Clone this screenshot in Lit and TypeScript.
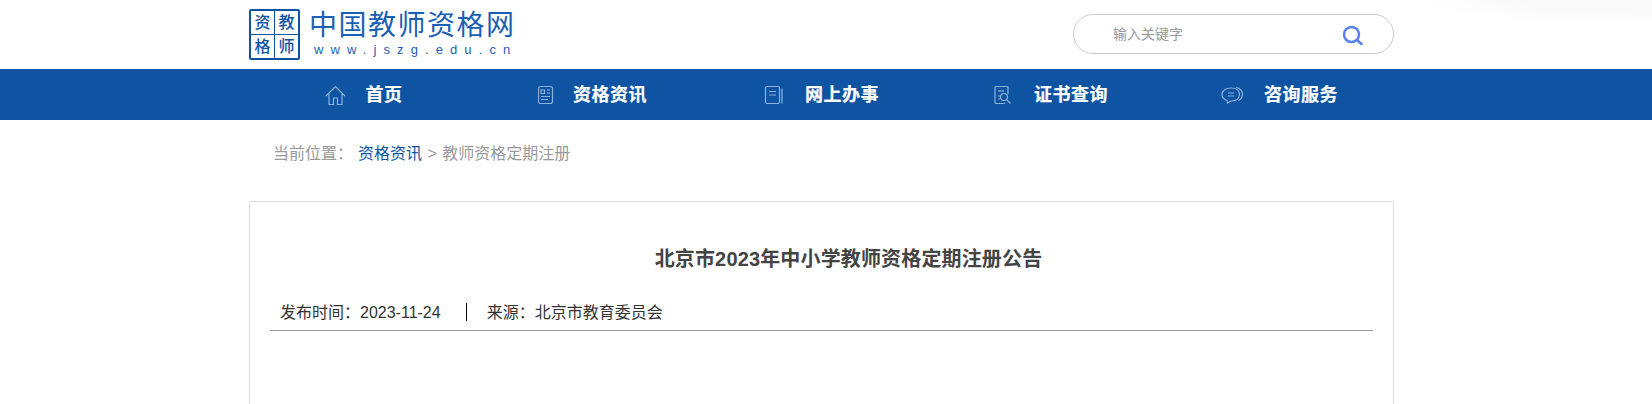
import { LitElement, html, css, svg } from "lit";
import { customElement } from "lit/decorators.js";

const navItems = [
  {
    label: "首页",
    width: 22,
    box: "0 0 22 20",
    icon: svg`<path d="M1 11 10.500 1.500 20 11M4 9v10.500h4.500v-6.500h4v6.500H17V9" />`,
  },
  {
    label: "资格资讯",
    width: 16,
    box: "2 0 16 20",
    icon: svg`<rect x="2.500" y="1.500" width="14" height="17" rx="2" /><path d="M5 5h3.500v3.500H5zM11 5h3M11 8h3M5 11.500h9M5 14.500h7" />`,
  },
  {
    label: "网上办事",
    width: 22,
    box: "0 0 22 20",
    icon: svg`<rect x="1.500" y="1.500" width="14" height="17" rx="1.500" /><path d="M5 6.500h7M5 10h7M18 3.500v15" />`,
  },
  {
    label: "证书查询",
    width: 22,
    box: "0 0 22 20",
    icon: svg`<path d="M15 9V2.500a1 1 0 0 0-1-1H3a1 1 0 0 0-1 1v15a1 1 0 0 0 1 1h9" /><path d="M5 6h6" /><circle cx="11" cy="12" r="3.500" /><path d="m14 15 3.500 3.500M5 11h2M5 14h2" />`,
  },
  {
    label: "咨询服务",
    width: 24,
    box: "0 0 24 20",
    icon: svg`<path d="M10 3c5 0 8.500 2.500 8.500 6.500S15 16 10 16l-1 .5-2.500 1.500-.5-2.500C3 14.500 1 12.500 1 9.500 1 5.500 5 3 10 3Z" /><path d="M15 2.500c4 .5 6.500 3.500 6.500 6.500 0 2.500-1 5-4 6.500M7 8h6M7 11h6" />`,
  },
];

@customElement("app-root")
export class AppRoot extends LitElement {
  static styles = css`
    :host {
      display: block;
      height: 404px;
      overflow: hidden;
      background: #fff;
      font-family: "Liberation Sans", "Noto Sans CJK SC", sans-serif;
    }
    .wrap {
      width: 1145px;
      margin-left: 249px;
    }
    .top {
      background: radial-gradient(ellipse 240px 26px at 100% 0, #f9f9f9 55%, #fff);
    }
    .header {
      height: 69px;
      display: flex;
      align-items: flex-start;
      justify-content: space-between;
    }
    .logo {
      display: flex;
      gap: 9px;
      padding-top: 9px;
    }
    .seal {
      width: 51px;
      height: 51px;
      box-sizing: border-box;
      border: 2px solid #0f54a3;
      border-radius: 2px;
      display: grid;
      grid-template-columns: 1fr 1fr;
      grid-template-rows: 1fr 1fr;
      gap: 1px;
      background: #0f54a3;
    }
    .seal span {
      background: #fff;
      color: #0f54a3;
      font-size: 16px;
      line-height: 23px;
      text-align: center;
      font-weight: 500;
    }
    .logo-text {
      display: flex;
      flex-direction: column;
      color: #1b5fb4;
    }
    .logo-cn {
      font-size: 28px;
      line-height: 34px;
      letter-spacing: 1.5px;
      font-weight: 400;
      white-space: nowrap;
    }
    .logo-en {
      font-size: 13px;
      line-height: 14px;
      letter-spacing: 7.1px;
      padding-left: 5px;
      white-space: nowrap;
    }
    .search {
      margin-top: 14px;
      width: 321px;
      height: 40px;
      box-sizing: border-box;
      border: 1px solid #ccc;
      border-radius: 20px;
      display: flex;
      align-items: center;
      justify-content: space-between;
      padding: 0 30px 2px 39px;
      color: #999;
      font-size: 14px;
    }
    .search svg {
      width: 21px;
      height: 21px;
      margin-top: 4px;
      fill: none;
      stroke: #5b7fe8;
      stroke-width: 2.5;
      stroke-linecap: round;
    }
    .nav {
      height: 51px;
      background: #0f54a3;
    }
    .nav-row {
      display: grid;
      grid-template-columns: repeat(5, 1fr);
      box-sizing: border-box;
      height: 100%;
      padding-bottom: 4px;
    }
    .nav-item {
      display: flex;
      align-items: center;
      justify-content: center;
      gap: 19px;
      color: #fff;
      font-size: 18px;
      font-weight: 700;
      letter-spacing: 0.5px;
      -webkit-text-stroke: 0.2px #fff;
    }
    .nav-item svg {
      height: 20px;
      margin-top: 5px;
      fill: none;
      stroke: #8fb0d8;
      stroke-width: 1.2;
    }
    .crumbs {
      padding: 22px 0 0 24px;
      height: 59px;
      line-height: 24px;
      font-size: 16px;
      word-spacing: 1px;
      color: #999;
    }
    .crumbs a {
      color: #0f54a3;
      margin-left: 5px;
    }
    .article {
      box-sizing: border-box;
      height: 260px;
      border: 1px solid #ddd;
      padding: 0 20px;
    }
    .title {
      margin: 0;
      padding: 42px 0 0 54px;
      line-height: 30px;
      font-size: 20px;
      font-weight: 700;
      letter-spacing: 0.15px;
      color: #444;
      text-align: center;
    }
    .meta {
      margin-top: 27px;
      height: 30px;
      box-sizing: border-box;
      border-bottom: 1px solid #999;
      display: flex;
      align-items: flex-start;
      padding-left: 10px;
      font-size: 16px;
      line-height: 24px;
      color: #333;
    }
    .meta .sep {
      width: 1px;
      height: 18px;
      margin: 2px 20px 0 25px;
      background: #000;
    }
  `;

  render() {
    return html`
      <div class="top">
        <div class="wrap header">
          <div class="logo">
            <div class="seal"><span>资</span><span>教</span><span>格</span><span>师</span></div>
            <div class="logo-text">
              <div class="logo-cn">中国教师资格网</div>
              <div class="logo-en">www.jszg.edu.cn</div>
            </div>
          </div>
          <div class="search">
            <span>输入关键字</span>
            <svg viewBox="0 0 21 21"><circle cx="9.500" cy="9.500" r="7.500" /><path d="m15 15 4.500 4" /></svg>
          </div>
        </div>
      </div>
      <div class="nav">
        <div class="wrap nav-row">
          ${navItems.map(
            (item) => html`
              <div class="nav-item">
                <svg viewBox=${item.box} style="width: ${item.width}px">${item.icon}</svg>
                <span>${item.label}</span>
              </div>
            `
          )}
        </div>
      </div>
      <div class="wrap">
        <div class="crumbs">当前位置：<a>资格资讯</a> &gt; 教师资格定期注册</div>
        <div class="article">
          <h1 class="title">北京市2023年中小学教师资格定期注册公告</h1>
          <div class="meta">
            <span>发布时间：2023-11-24</span>
            <span class="sep"></span>
            <span>来源：北京市教育委员会</span>
          </div>
        </div>
      </div>
    `;
  }
}
